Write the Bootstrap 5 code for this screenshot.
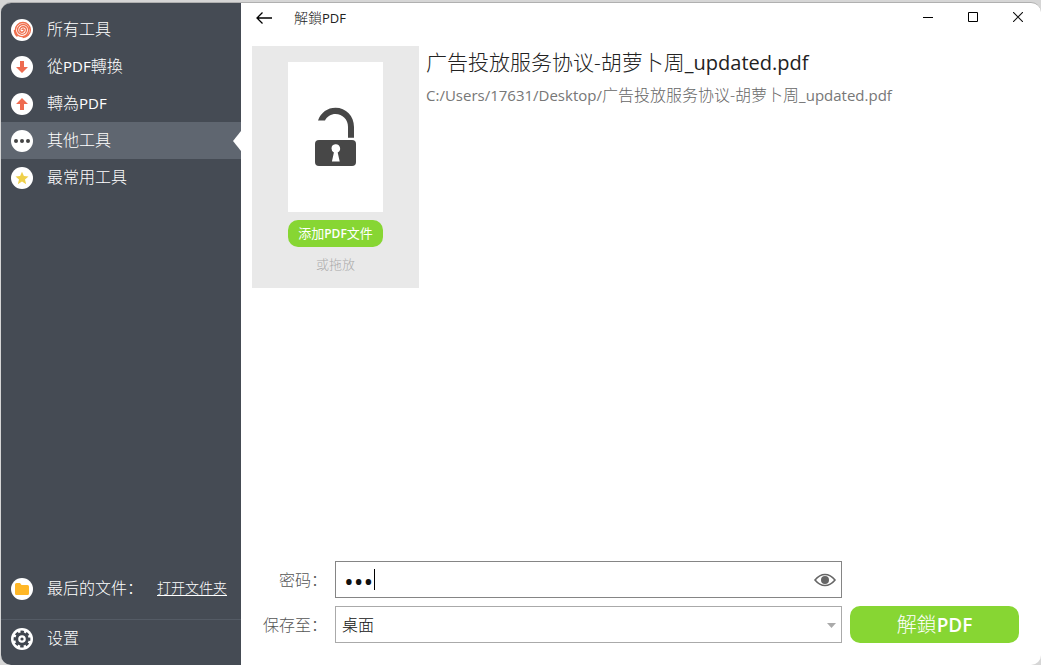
<!DOCTYPE html>
<html lang="zh-Hans">
<head>
<meta charset="utf-8">
<meta name="viewport" content="width=device-width, initial-scale=1">
<title>解鎖PDF</title>
<link href="https://cdn.jsdelivr.net/npm/bootstrap@5.3.0/dist/css/bootstrap.min.css" rel="stylesheet">
<style>
  body { background: #d6d6d6; font-family: "Open Sans", "Noto Sans CJK SC", sans-serif; font-size: 16px; font-weight: 300; line-height: 24px; color: #222; }
  .latin { font-weight: 400; font-size: 15px; }
  .app-window { min-height: calc(100vh - 2px); margin: 2px 0 0 1px; border-top: 1px solid #b0b0b0; border-radius: 10px; overflow: hidden; background: #fff; }
  .sidebar { width: 240px; background: #454b54; padding: 8px 0; }
  .side-item { display: flex; align-items: center; gap: 14px; height: 37px; padding: 0 10px; color: #fff; text-decoration: none; white-space: nowrap; position: relative; }
  .side-item > span, .side-item > .open-link { padding-bottom: 2px; }
  .side-item.active { background: #5f6670; }
  .side-item.active::after { content: ""; position: absolute; right: 0; top: 9px; border: solid transparent; border-width: 10px 8px 10px 0; border-right-color: #fff; }
  .side-item svg { width: 22px; height: 22px; flex: none; }
  .open-link { font-size: 14px; color: #fff; text-underline-offset: 2px; }
  .side-rule { height: 1px; background: #545b65; margin-top: 12px; }
  .titlebar { height: 30px; font-size: 14px; }
  .titlebar .latin { font-size: 13px; }
  .plain { border: 0; background: none; padding: 0; color: #000; display: flex; align-items: center; justify-content: center; }
  .winbtn { width: 45px; height: 28px; }
  .win-controls { padding-right: 1px; }
  .file-area { padding: 13px 11px; gap: 7px; }
  .drop-card { width: 167px; height: 242px; background: #e9e9e9; padding-top: 16px; }
  .page-thumb { width: 95px; height: 150px; background: #fff; }
  .btn-green { background: #87d633; color: #fff; border: 0; padding: 0; border-radius: 10px; }
  .btn-green:hover { background: #7bc82a; color: #fff; }
  .btn-add { width: 95px; height: 27px; font-size: 13px; line-height: 20px; font-weight: 400; margin-top: 8px; }
  .btn-add .latin { font-size: 12px; font-weight: 600; }
  .btn-go { height: 37px; font-size: 20px; font-weight: 300; }
  .btn-go .latin { font-size: 19px; font-weight: 600; }
  .drop-hint { font-size: 13px; line-height: 20px; color: #aaa; margin-top: 7px; }
  .file-name { font-size: 21px; line-height: 32px; font-weight: 300; margin-bottom: 4px; }
  .file-name .latin { font-size: 20px; }
  .file-path { color: #666; }
  .file-path .latin { color: #777; }
  .save-form { display: grid; grid-template-columns: 75px minmax(0, 1fr) 169px; gap: 8px; align-items: center; padding: 0 22px 22px 11px; }
  .save-form label { color: #555; text-align: right; white-space: nowrap; }
  .field { height: 37px; border: 1px solid #aaa; border-radius: 0; padding: 0 6px; color: #111; font-weight: 300; background: #fff; width: 100%; }
  .field.secret { border-color: #858585; padding: 2px 30px 0 8px; font-size: 26px; font-weight: 400; }
  .field:focus { box-shadow: none; border-color: #858585; }
  select.field { appearance: none; }
  .field-mark { position: absolute; right: 6px; top: 0; height: 37px; }
  .caret-mark { position: absolute; left: 39px; top: 8px; width: 1px; height: 21px; background: #000; }
</style>
</head>
<body>
<div class="app-window d-flex">
  <nav class="sidebar d-flex flex-column flex-shrink-0" lang="zh-Hant">
    <a class="side-item" href="#"><svg viewBox="0 0 22 22"><circle cx="11" cy="11" r="11" fill="#fff"/><path fill="none" stroke="#f0704f" stroke-width="1.400" d="M11 11a1.100 1.100 0 0 1 2.200 0a2.200 2.200 0 0 1-4.400 0a3.300 3.300 0 0 1 6.600 0a4.400 4.400 0 0 1-8.800 0a5.500 5.500 0 0 1 11 0a6.600 6.600 0 0 1-13.200 0a7.500 7.500 0 0 1 15 0a7.700 7.700 0 0 1-7.700 7.500M3.400 11q.2 4.500 3 6.500"/></svg><span>所有工具</span></a>
    <a class="side-item" href="#"><svg viewBox="0 0 22 22"><circle cx="11" cy="11" r="11" fill="#fff"/><path fill="#ee6b50" d="M9 5h4v6h4l-6 6-6-6h4z"/></svg><span>從<span class="latin">PDF</span>轉換</span></a>
    <a class="side-item" href="#"><svg viewBox="0 0 22 22"><circle cx="11" cy="11" r="11" fill="#fff"/><path fill="#ee6b50" d="M9 17h4v-6h4l-6-6-6 6h4z"/></svg><span>轉為<span class="latin">PDF</span></span></a>
    <a class="side-item active" href="#" aria-current="page"><svg viewBox="0 0 22 22"><circle cx="11" cy="11" r="11" fill="#fff"/><g fill="#444"><circle cx="5" cy="11" r="2"/><circle cx="11" cy="11" r="2"/><circle cx="17" cy="11" r="2"/></g></svg><span>其他工具</span></a>
    <a class="side-item" href="#"><svg viewBox="0 0 22 22"><circle cx="11" cy="11" r="11" fill="#fff"/><path fill="#efd04a" d="M11 4.800l1.900 4.200 4.600.4-3.500 3 1.200 4.800-4.200-2.600-4.200 2.600L8 12.400l-3.500-3L9.100 9z"/></svg><span>最常用工具</span></a>
    <div class="mt-auto" lang="zh-Hans">
      <div class="side-item"><svg viewBox="0 0 22 22"><circle cx="11" cy="11" r="11" fill="#fff"/><path fill="#ffb727" d="M4 6.500Q4 5 5.500 5H9l1.500 2h6Q18 7 18 8.500v7q0 1.500-1.500 1.500h-11Q4 17 4 15.500z"/></svg><span>最后的文件：</span><a class="open-link" href="#">打开文件夹</a></div>
      <div class="side-rule"></div>
      <a class="side-item" href="#"><svg viewBox="0 0 22 22"><circle cx="11" cy="11" r="11" fill="#fff"/><circle cx="11" cy="11" r="5.300" fill="none" stroke="#40464f" stroke-width="3"/><circle cx="11" cy="11" r="7.200" fill="none" stroke="#40464f" stroke-width="2.400" stroke-dasharray="3.400 2.255" stroke-dashoffset="1.700"/><circle cx="11" cy="11" r="1.600" fill="#40464f"/></svg><span>设置</span></a>
    </div>
  </nav>
  <main class="flex-grow-1 d-flex flex-column">
    <header class="titlebar d-flex align-items-center" lang="zh-Hant">
      <button class="plain winbtn" type="button" aria-label="返回"><svg width="18" height="14" viewBox="0 0 18 14" fill="none" stroke="#000" stroke-width="1.300"><path d="M17 7H2M7.500 1.500L2 7l5.500 5.500"/></svg></button>
      <span class="ms-2">解鎖<span class="latin">PDF</span></span>
      <div class="win-controls d-flex align-self-start ms-auto">
        <button class="plain winbtn" type="button" aria-label="最小化"><svg width="10" height="10"><path d="M0 5.500h10" stroke="#000"/></svg></button>
        <button class="plain winbtn" type="button" aria-label="最大化"><svg width="10" height="10"><path d="M.5.500h9v9h-9z" fill="none" stroke="#000"/></svg></button>
        <button class="plain winbtn" type="button" aria-label="關閉"><svg width="10" height="10"><path d="M0 0l10 10M10 0L0 10" stroke="#111" stroke-width="1.100"/></svg></button>
      </div>
    </header>
    <section class="file-area d-flex flex-grow-1">
      <div class="drop-card d-flex flex-column align-items-center flex-shrink-0">
        <div class="page-thumb d-flex align-items-center justify-content-center">
          <svg width="42" height="60" viewBox="0 0 42 60"><path fill="#474747" d="M3 13.500C6 5.500 12.500.8 20.500.8C31 .8 39 9 39 20v10.700h-6V20C33 12.500 27.500 7 20.500 7C16 7 12 9.500 10 13.500z"/><rect y="33" width="41" height="26" rx="4" fill="#474747"/><path fill="#fff" d="M16.500 41.500a4.300 4.300 0 1 1 6.200 3.900l2 9.200h-7.800l2-9.200a4.300 4.300 0 0 1-2.400-3.900z"/></svg>
        </div>
        <button class="btn btn-green btn-add" type="button">添加<span class="latin">PDF</span>文件</button>
        <div class="drop-hint">或拖放</div>
      </div>
      <div>
        <h1 class="file-name">广告投放服务协议-胡萝卜周<span class="latin">_updated.pdf</span></h1>
        <div class="file-path"><span class="latin">C:/Users/17631/Desktop/</span>广告投放服务协议-胡萝卜周<span class="latin">_updated.pdf</span></div>
      </div>
    </section>
    <form class="save-form">
      <label for="pw">密码：</label>
      <div class="position-relative">
        <input class="field secret d-block" id="pw" type="password" value="123">
        <span class="caret-mark"></span>
        <button class="plain field-mark" type="button" aria-label="显示密码"><svg width="22" height="14" viewBox="0 0 22 14"><path d="M1 7Q5.500 1.500 11 1.500T21 7Q16.500 12.500 11 12.500T1 7z" fill="none" stroke="#666" stroke-width="1.600"/><circle cx="11" cy="7" r="4" fill="#666"/></svg></button>
      </div>
      <span></span>
      <label for="dest">保存至：</label>
      <div class="position-relative">
        <select class="field d-block" id="dest"><option>桌面</option></select>
        <svg class="field-mark pe-none" width="9" height="37"><path d="M0 17h9l-4.500 5z" fill="#aaa"/></svg>
      </div>
      <button class="btn btn-green btn-go" type="button" lang="zh-Hant">解鎖<span class="latin">PDF</span></button>
    </form>
  </main>
</div>
<script src="https://cdn.jsdelivr.net/npm/bootstrap@5.3.0/dist/js/bootstrap.bundle.min.js"></script>
</body>
</html>
